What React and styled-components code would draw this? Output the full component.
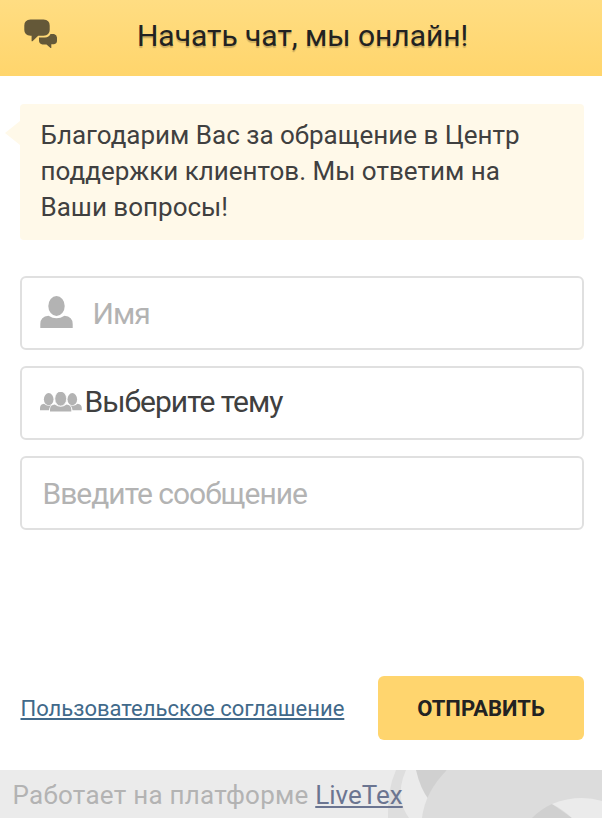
import styled, { createGlobalStyle } from "styled-components";

export default function App() {
  return (
    <Container>
      <GlobalStyle />
      <Header>
        <ChatIcon />
        <Title>Начать чат, мы онлайн!</Title>
      </Header>
      <Content>
        <Bubble>
          Благодарим Вас за обращение в Центр поддержки клиентов. Мы ответим на
          Ваши вопросы!
        </Bubble>
        <Form>
          <Field>
            <UserIcon />
            <FieldText $muted $left={19.5}>Имя</FieldText>
          </Field>
          <Field>
            <GroupIcon />
            <FieldText $left={2.5}>Выберите тему</FieldText>
          </Field>
          <Field>
            <FieldText $muted $left={2.5}>Введите сообщение</FieldText>
          </Field>
        </Form>
        <Actions>
          <Agreement href="#">Пользовательское соглашение</Agreement>
          <Submit type="button">Отправить</Submit>
        </Actions>
      </Content>
      <Footer>
        <FooterArt />
        <FooterText>
          Работает на платформе <a href="#">LiveTex</a>
        </FooterText>
      </Footer>
    </Container>
  );
}

function ChatIcon() {
  return (
    <HeaderIcon width="34" height="30" viewBox="0 0 34 30" fill="#645838">
      <path d="M6.500 .6H19.500Q25.700 1.200 25.700 6.500V11Q25.700 16.200 19.500 16.700H14.200L8.500 22.200H7.600V16.700H6.500Q.3 16.200 .3 11V6.500Q.3 1.200 6.500 .6Z" />
      <path d="M26.500 15H30Q32.800 15.700 33 18.500V22Q32.800 24.800 30 25.200H27.300V29H26.500L22.500 25.600H18.500Q15.200 24.800 15 22V18.500H21Q25 18.200 26.500 15Z" />
    </HeaderIcon>
  );
}

function UserIcon() {
  return (
    <svg width="33" height="32" viewBox="0 0 33 32" fill="#b3b3b3">
      <ellipse cx="16.500" cy="10" rx="8.200" ry="10" />
      <path d="M.3 32V28Q.3 20.500 8.500 19.700Q16.500 25 24.500 19.700Q32.700 20.500 32.700 28V32Z" />
    </svg>
  );
}

function GroupIcon() {
  return (
    <svg width="42" height="20" viewBox="0 0 42 20" fill="#b3b3b3">
      <ellipse cx="8.700" cy="7.200" rx="4.800" ry="6.100" />
      <ellipse cx="32.300" cy="7.200" rx="4.800" ry="6.100" />
      <path d="M0 18.300V16Q0 12.300 4 11.700Q8 15.500 12.500 12.500Q9.300 14.200 9 18.300Z" />
      <path d="M41.800 18.300V16Q41.800 12.300 37.500 11.700Q33.500 15.500 29 12.500Q32.200 14.200 32.500 18.300Z" />
      <ellipse cx="20.700" cy="6.700" rx="5.900" ry="7.400" stroke="#fff" strokeWidth=".8" />
      <path d="M10 19.500V17.500Q10 13.200 14.800 12.500Q20.700 17 26.500 12.500Q31.300 13.200 31.300 17.500V19.500Z" />
    </svg>
  );
}

function FooterArt() {
  return (
    <Art width="222" height="48" viewBox="0 0 222 48">
      <path d="M16 0H26Q19 16 21 29Q23 40 29 48H8Q7 20 16 0Z" fill="#dedede" />
      <path d="M36 0H67L49 30Q40 18 36 0Z" fill="#d0d0d0" />
      <path d="M67 0H222V48H42Q45 22 67 0Z" fill="#dcdcdc" />
      <path d="M152 48Q161 39 172 34L192 48Z" fill="#d0d0d0" />
      <path d="M172 34Q198 24 222 31V48H192Q182 39 172 34Z" fill="#ebebeb" />
    </Art>
  );
}

const GlobalStyle = createGlobalStyle`
  * {
    box-sizing: border-box;
  }
  body {
    margin: 0;
    background: #fff;
    font-family: Roboto, sans-serif;
  }
`;
const Container = styled.div`
  width: 602px;
  height: 818px;
  display: flex;
  flex-direction: column;
  overflow: hidden;
`;
const Header = styled.header`
  height: 76px;
  flex: none;
  display: flex;
  align-items: center;
  padding: 0 24px;
  background: linear-gradient(#ffdd82, #ffd56c);
`;
const HeaderIcon = styled.svg`
  margin-bottom: 8px;
`;
const Title = styled.h1`
  margin: 0 0 4px 79px;
  font-size: 30px;
  line-height: 36px;
  font-weight: 400;
  letter-spacing: -0.03px;
  white-space: nowrap;
  color: #222;
  text-shadow: 0 2px 1px rgba(0, 0, 0, 0.2);
`;
const Content = styled.main`
  flex: 1;
  display: flex;
  flex-direction: column;
  padding: 28px 18px 30px 20px;
`;
const Bubble = styled.div`
  position: relative;
  height: 136px;
  padding: 13px 20px 13px 20.5px;
  border-radius: 4px;
  background: #fff9e9;
  color: #404040;
  font-size: 26px;
  line-height: 36px;
  /* tail pointing to the left */
  &::before {
    content: "";
    position: absolute;
    left: -15px;
    top: 17px;
    border: solid transparent;
    border-width: 12px 15px 12px 0;
    border-right-color: #fff9e9;
  }
`;
const Form = styled.div`
  display: flex;
  flex-direction: column;
  gap: 16px;
  margin-top: 36px;
`;
const Field = styled.div`
  height: 74px;
  display: flex;
  align-items: center;
  padding: 0 18px;
  border: 2px solid #e0e0e0;
  border-radius: 6px;
  svg {
    margin-bottom: 2px;
  }
`;
const FieldText = styled.span`
  margin-left: ${(props) => props.$left}px;
  margin-top: ${(props) => (props.$muted ? "2px" : "-2px")};
  color: ${(props) => (props.$muted ? "#b3b3b3" : "#404040")};
  font-size: 30px;
  line-height: 36px;
  letter-spacing: -1px;
  white-space: nowrap;
`;
const Actions = styled.div`
  display: flex;
  align-items: center;
  justify-content: space-between;
  margin-top: auto;
`;
const Agreement = styled.a`
  margin-left: 0.5px;
  color: #41698a;
  font-size: 22px;
  white-space: nowrap;
`;
const Submit = styled.button`
  width: 206px;
  height: 64px;
  border: 0;
  border-radius: 6px;
  background: #ffd56e;
  color: #222;
  font-family: inherit;
  font-size: 22px;
  font-weight: 700;
  text-transform: uppercase;
`;
const Footer = styled.footer`
  position: relative;
  height: 48px;
  flex: none;
  display: flex;
  align-items: center;
  padding: 2px 12.5px 0;
  background: #ebebeb;
`;
const Art = styled.svg`
  position: absolute;
  right: 0;
  top: 0;
`;
const FooterText = styled.div`
  position: relative;
  color: #b3b3b3;
  font-size: 26px;
  line-height: 36px;
  letter-spacing: 0.25px;
  white-space: nowrap;
  a {
    color: #6b7591;
    letter-spacing: 0;
  }
`;
